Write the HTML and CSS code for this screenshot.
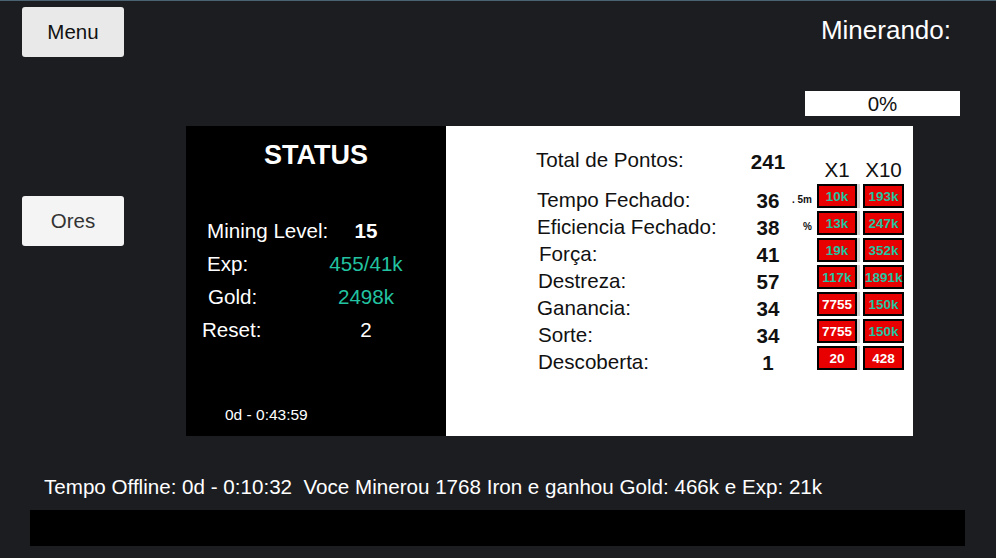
FILE: index.html
```html
<!DOCTYPE html>
<html lang="pt">
<head>
  <meta charset="UTF-8">
  <title>Mineração</title>
  <link rel="stylesheet" href="styles.css">
</head>
<body>
  <!-- Top bar -->
  <div class="top">
    <button class="btn btn-menu">Menu</button>
    <div class="miner">
      <h2>Minerando:</h2>
      <div class="progress">0%</div>
    </div>
  </div>

  <div class="main">
    <div class="side">
      <button class="btn btn-ores">Ores</button>
    </div>

    <!-- Status panel -->
    <div class="status">
      <h1>STATUS</h1>
      <div class="stats">
        <span class="label">Mining Level:</span><span class="val bold">15</span>
        <span class="label">Exp:</span><span class="val teal">455/41k</span>
        <span class="label gold">Gold:</span><span class="val teal">2498k</span>
        <span class="label reset">Reset:</span><span class="val">2</span>
      </div>
      <div class="time">0d - 0:43:59</div>
    </div>

    <!-- Points panel -->
    <div class="points">
      <div class="grid header">
        <span class="head">Total de Pontos:</span>
        <span class="head total">241</span>
        <span></span>
        <span class="col-head">X1</span>
        <span></span>
        <span class="col-head">X10</span>
      </div>
      <div class="grid rows" id="rows"></div>
    </div>
  </div>

  <p class="offline">Tempo Offline: 0d - 0:10:32&nbsp; Voce Minerou 1768 Iron e ganhou Gold: 466k e Exp: 21k</p>
  <div class="log"></div>

  <script>
    const attrs = [
      { name: 'Tempo Fechado:', val: 36, note: '. 5m', x1: '10k', x10: '193k' },
      { name: 'Eficiencia Fechado:', val: 38, note: '%', x1: '13k', x10: '247k' },
      { name: 'Força:', val: 41, x1: '19k', x10: '352k', shift: 3 },
      { name: 'Destreza:', val: 57, x1: '117k', x10: '1891k', shift: 2 },
      { name: 'Ganancia:', val: 34, x1: '7755', x10: '150k', white1: true },
      { name: 'Sorte:', val: 34, x1: '7755', x10: '150k', white1: true, shift: 2 },
      { name: 'Descoberta:', val: 1, x1: '20', x10: '428', white1: true, white10: true, shift: 2 }
    ];

    const rows = document.getElementById('rows');
    attrs.forEach(a => {
      rows.innerHTML += `
        <span class="p-label" style="padding-left:${a.shift || 1}px">${a.name}</span>
        <span class="p-val">${a.val}</span>
        <span class="note">${a.note || ''}</span>
        <button class="buy x1 ${a.white1 ? 'white' : ''}">${a.x1}</button>
        <span></span>
        <button class="buy ${a.white10 ? 'white' : ''}">${a.x10}</button>`;
    });
  </script>
</body>
</html>
```

FILE: styles.css
```css
body { margin: 0; background-color: #1c1d21; border-top: 1px solid #4b6272; font-family: "Liberation Sans", Arial, sans-serif; color: #fff; height: 557px; overflow: hidden; }

.btn { width: 102px; height: 50px; border: none; border-radius: 3px; font-family: inherit; font-size: 20.5px; cursor: pointer; }
.btn-menu { margin: 6px 0 0 22px; background-color: #e9e9e9; color: #111; }
.btn-ores { margin-left: 22px; background-color: #f4f4f4; color: #333; }

.top { display: flex; justify-content: space-between; height: 125px; }
.miner { display: flex; flex-direction: column; align-items: flex-end; width: 155px; margin-right: 36px; }
.miner h2 { margin: 14px 9px 0 0; font-size: 26px; font-weight: normal; line-height: 30px; }
.progress { margin-top: auto; margin-bottom: 10px; width: 155px; height: 25px; background: #fff; color: #111; font-size: 20.5px; line-height: 26px; text-align: center; }

.main { display: flex; height: 310px; }
.side { width: 186px; padding-top: 70px; }

.status { width: 260px; background: #000; display: flex; flex-direction: column; }
.status h1 { margin: 14px 0 0; font-size: 27px; line-height: 30px; text-align: center; }
.stats { display: grid; grid-template-columns: 99px 120px; grid-auto-rows: 33px; align-items: center; margin-top: 44px; padding-left: 21px; font-size: 20.6px; }
.stats .label { white-space: nowrap; }
.stats .gold { padding-left: 1px; }
.stats .reset { margin-left: -5px; }
.stats .val { text-align: center; }
.bold { font-weight: bold; }
.teal { color: #22c3a1; }
.time { margin: auto 0 12px 39px; font-size: 15.5px; line-height: 18px; }

.points { width: 467px; background: #fff; color: #111; padding: 20px 0 0 90px; box-sizing: border-box; }
.grid { display: grid; grid-template-columns: 204px 50px 27px 40px 6px 41px; }
.header { height: 38px; }
.head { font-size: 20.6px; line-height: 28px; white-space: nowrap; }
.total { font-weight: bold; line-height: 32px; text-align: center; padding-left: 6px; }
.col-head { align-self: end; font-size: 20.6px; line-height: 24px; text-align: center; margin-bottom: 2px; }
.rows { grid-auto-rows: 27px; }
.p-label { font-size: 20.6px; line-height: 24px; padding-top: 4px; white-space: nowrap; }
.p-val { font-size: 20.6px; font-weight: bold; text-align: center; padding-left: 6px; line-height: 24px; padding-top: 5px; }
.note { font-size: 10px; font-weight: bold; text-align: right; padding-right: 5px; line-height: 24px; padding-top: 4px; }
.buy { width: 100%; height: 24px; padding: 0; border: 2px solid #000; background: #e80000; color: #22c3a1; font-family: inherit; font-size: 13.5px; font-weight: bold; }
.buy.white { color: #fff; }
.x1 { box-shadow: 3px 0 0 #d4d4d4; }

.offline { margin: 40px 0 0 44px; font-size: 20.6px; line-height: 22px; }
.log { margin: 12px 31px 0 30px; height: 36px; background: #000; }
```
